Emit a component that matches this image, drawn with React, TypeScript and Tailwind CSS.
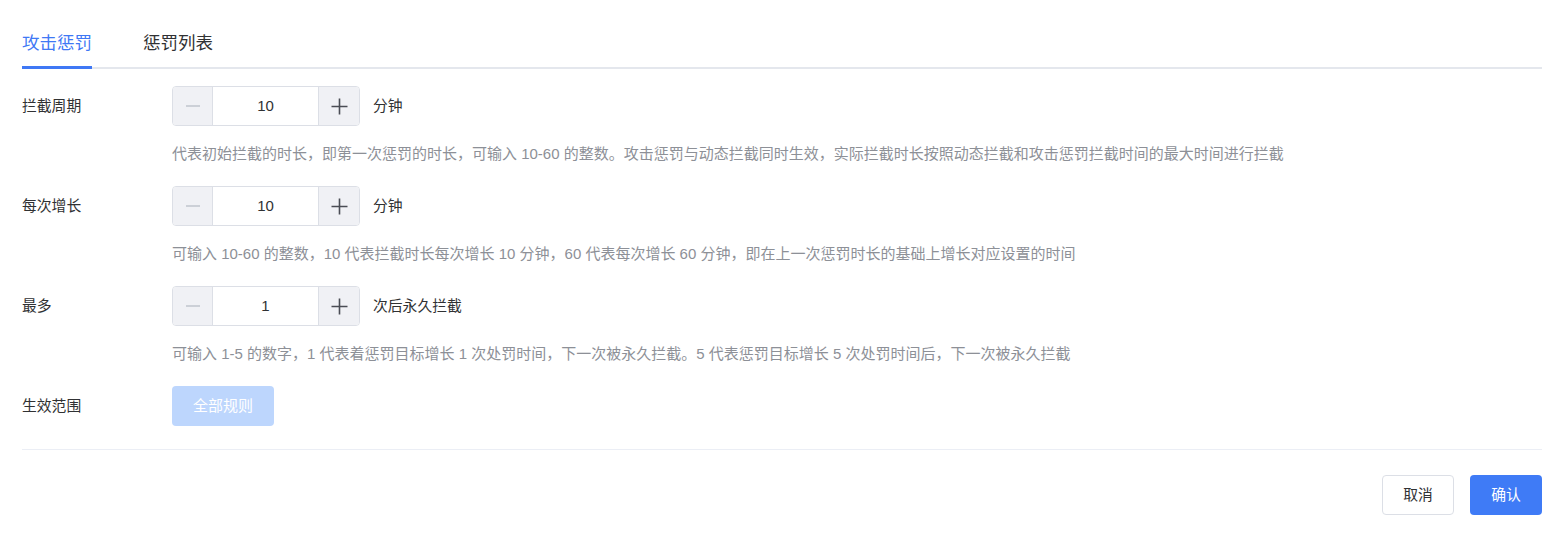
const FONT = { fontFamily: '"Liberation Sans", "Noto Sans CJK SC", sans-serif' };

function MinusIcon() {
  return (
    <svg width="16" height="16" viewBox="0 0 16 16" aria-hidden="true">
      <line x1="1" y1="8" x2="15" y2="8" stroke="#c0c4cc" strokeWidth="1.6" />
    </svg>
  );
}

function PlusIcon() {
  return (
    <svg width="17" height="17" viewBox="0 0 17 17" aria-hidden="true">
      <line x1="0.5" y1="8.5" x2="16.5" y2="8.5" stroke="#4a4d55" strokeWidth="1.6" />
      <line x1="8.5" y1="0.5" x2="8.5" y2="16.5" stroke="#4a4d55" strokeWidth="1.6" />
    </svg>
  );
}

interface StepperRowProps {
  label: string;
  value: string;
  unit: string;
  hint: string;
}

function StepperRow({ label, value, unit, hint }: StepperRowProps) {
  return (
    <div className="mb-[22px]">
      <div className="flex items-center h-[40px]">
        <div className="w-[150px] text-[14.8px] text-[#303133]">{label}</div>
        <div className="flex w-[188px] h-[40px] border border-[#dcdfe6] rounded-[4px] overflow-hidden">
          <button className="w-[40px] flex items-center justify-center bg-[#f0f1f5] border-r border-[#dcdfe6]">
            <MinusIcon />
          </button>
          <div className="flex-1 flex items-center justify-center text-[15px] text-[#303133] bg-white">
            {value}
          </div>
          <button className="w-[41px] flex items-center justify-center bg-[#f0f1f5] border-l border-[#dcdfe6]">
            <PlusIcon />
          </button>
        </div>
        <span className="ml-[13px] text-[14.8px] text-[#303133]">{unit}</span>
      </div>
      <p className="mt-[18px] ml-[150px] text-[15px] leading-[20px] text-[#8d9097]">{hint}</p>
    </div>
  );
}

export default function App() {
  return (
    <div className="bg-white w-[1561px] h-[536px] pl-[22px] pr-[19px] pt-[22px]" style={FONT}>
      <div className="flex gap-[51px] h-[47px] border-b-2 border-[#e4e7ed]">
        <div className="h-[47px] -mb-[2px] flex items-center border-b-[3px] border-[#3f78f5] text-[17.5px] text-[#3f78f5] pb-[1px]">
          攻击惩罚
        </div>
        <div className="h-[47px] -mb-[2px] flex items-center border-b-[3px] border-transparent text-[17.5px] text-[#303133] pb-[1px]">
          惩罚列表
        </div>
      </div>

      <div className="mt-[17px]">
        <StepperRow
          label="拦截周期"
          value="10"
          unit="分钟"
          hint="代表初始拦截的时长，即第一次惩罚的时长，可输入 10-60 的整数。攻击惩罚与动态拦截同时生效，实际拦截时长按照动态拦截和攻击惩罚拦截时间的最大时间进行拦截"
        />
        <StepperRow
          label="每次增长"
          value="10"
          unit="分钟"
          hint="可输入 10-60 的整数，10 代表拦截时长每次增长 10 分钟，60 代表每次增长 60 分钟，即在上一次惩罚时长的基础上增长对应设置的时间"
        />
        <StepperRow
          label="最多"
          value="1"
          unit="次后永久拦截"
          hint="可输入 1-5 的数字，1 代表着惩罚目标增长 1 次处罚时间，下一次被永久拦截。5 代表惩罚目标增长 5 次处罚时间后，下一次被永久拦截"
        />
        <div className="flex items-center h-[40px]">
          <div className="w-[150px] text-[14.8px] text-[#303133]">生效范围</div>
          <button className="w-[102px] h-[40px] rounded-[4px] bg-[#bdd6fd] text-white text-[15px]">
            全部规则
          </button>
        </div>
      </div>

      <div className="mt-[23px] border-t border-[#ebeef5]" />

      <div className="flex justify-end gap-[16px] mt-[25px]">
        <button className="w-[72px] h-[40px] rounded-[4px] border border-[#dcdfe6] bg-white text-[14.8px] text-[#303133]">
          取消
        </button>
        <button className="w-[72px] h-[40px] rounded-[4px] bg-[#3f7bf6] text-white text-[14.8px]">
          确认
        </button>
      </div>
    </div>
  );
}
